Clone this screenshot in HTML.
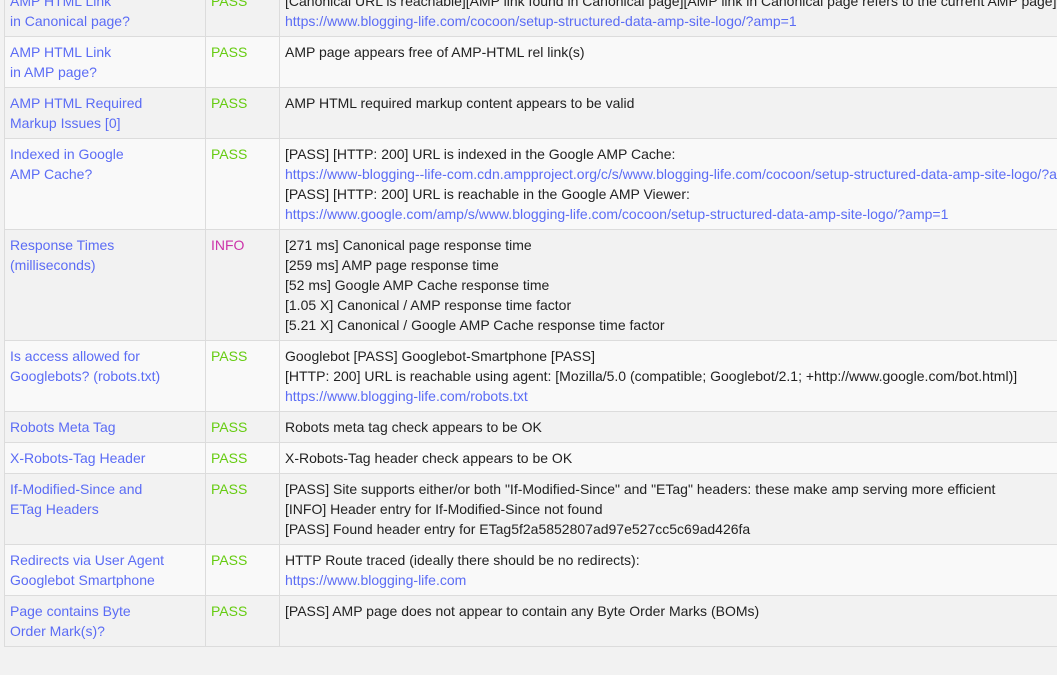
<!DOCTYPE html>
<html><head><meta charset="utf-8"><style>
html,body{margin:0;padding:0;background:#f2f2f2;width:1057px;height:675px;overflow:hidden}
table{position:absolute;left:4px;top:-15px;border-collapse:collapse;font-family:"Liberation Sans",Arial,sans-serif;font-size:14px;line-height:20px;color:#222;width:1100px}
td{border:1px solid #dcdcdc;padding:5px 5px;vertical-align:top;white-space:nowrap}
td.a{width:190px;color:#5b6cf5}
td.b{width:63px;color:#66cc11}
td.i{color:#cc33aa}
a{color:#5b6cf5;text-decoration:none}
tr:nth-child(odd){background:#f2f2f2}
tr:nth-child(even){background:#f9f9f9}
</style></head><body>
<table>
<tr><td class="a">AMP HTML Link<br>in Canonical page?</td><td class="b">PASS</td><td>[Canonical URL is reachable][AMP link found in Canonical page][AMP link in Canonical page refers to the current AMP page]<br><a>https://www.blogging-life.com/cocoon/setup-structured-data-amp-site-logo/?amp=1</a></td></tr>
<tr><td class="a">AMP HTML Link<br>in AMP page?</td><td class="b">PASS</td><td>AMP page appears free of AMP-HTML rel link(s)</td></tr>
<tr><td class="a">AMP HTML Required<br>Markup Issues [0]</td><td class="b">PASS</td><td>AMP HTML required markup content appears to be valid</td></tr>
<tr><td class="a">Indexed in Google<br>AMP Cache?</td><td class="b">PASS</td><td>[PASS] [HTTP: 200] URL is indexed in the Google AMP Cache:<br><a>https://www-blogging--life-com.cdn.ampproject.org/c/s/www.blogging-life.com/cocoon/setup-structured-data-amp-site-logo/?amp=1</a><br>[PASS] [HTTP: 200] URL is reachable in the Google AMP Viewer:<br><a>https://www.google.com/amp/s/www.blogging-life.com/cocoon/setup-structured-data-amp-site-logo/?amp=1</a></td></tr>
<tr><td class="a">Response Times<br>(milliseconds)</td><td class="b i">INFO</td><td>[271 ms] Canonical page response time<br>[259 ms] AMP page response time<br>[52 ms] Google AMP Cache response time<br>[1.05 X] Canonical / AMP response time factor<br>[5.21 X] Canonical / Google AMP Cache response time factor</td></tr>
<tr><td class="a">Is access allowed for<br>Googlebots? (robots.txt)</td><td class="b">PASS</td><td>Googlebot [PASS] Googlebot-Smartphone [PASS]<br>[HTTP: 200] URL is reachable using agent: [Mozilla/5.0 (compatible; Googlebot/2.1; +http://www.google.com/bot.html)]<br><a>https://www.blogging-life.com/robots.txt</a></td></tr>
<tr><td class="a">Robots Meta Tag</td><td class="b">PASS</td><td>Robots meta tag check appears to be OK</td></tr>
<tr><td class="a">X-Robots-Tag Header</td><td class="b">PASS</td><td>X-Robots-Tag header check appears to be OK</td></tr>
<tr><td class="a">If-Modified-Since and<br>ETag Headers</td><td class="b">PASS</td><td>[PASS] Site supports either/or both "If-Modified-Since" and "ETag" headers: these make amp serving more efficient<br>[INFO] Header entry for If-Modified-Since not found<br>[PASS] Found header entry for ETag5f2a5852807ad97e527cc5c69ad426fa</td></tr>
<tr><td class="a">Redirects via User Agent<br>Googlebot Smartphone</td><td class="b">PASS</td><td>HTTP Route traced (ideally there should be no redirects):<br><a>https://www.blogging-life.com</a></td></tr>
<tr><td class="a">Page contains Byte<br>Order Mark(s)?</td><td class="b">PASS</td><td>[PASS] AMP page does not appear to contain any Byte Order Marks (BOMs)</td></tr>
</table>
</body></html>
